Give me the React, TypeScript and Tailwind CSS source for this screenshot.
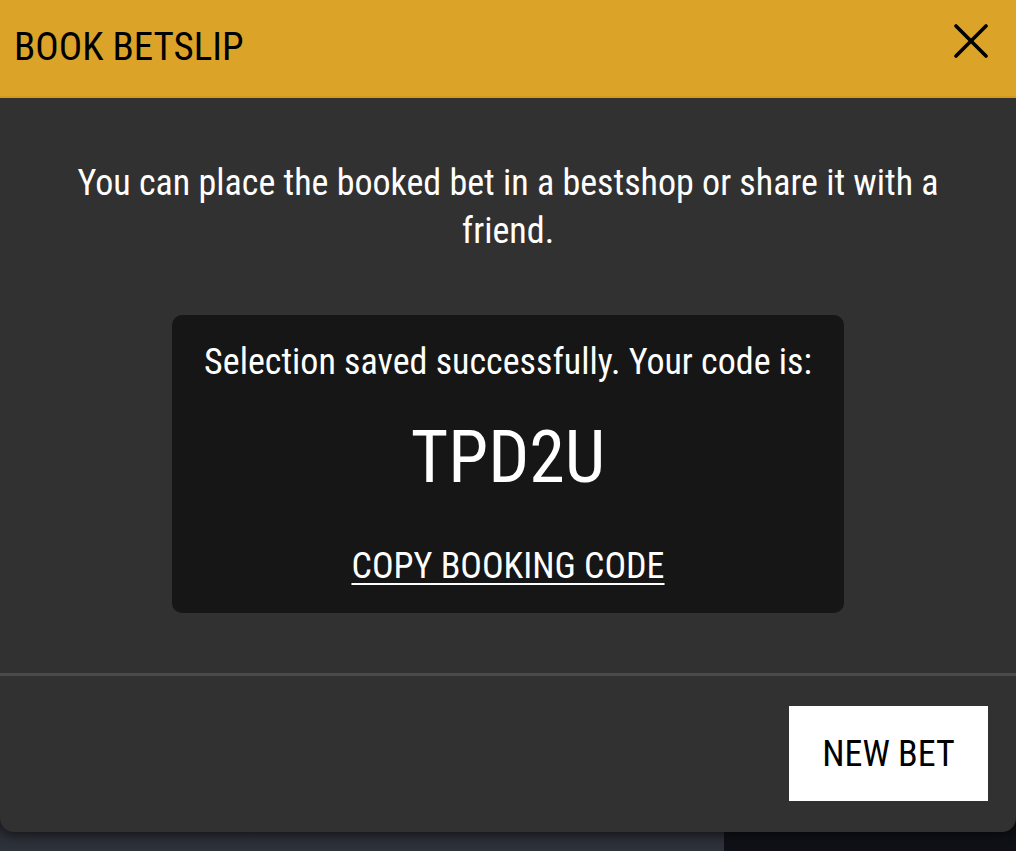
export default function App() {
  return (
    <div className="relative h-[851px] w-[1016px] overflow-hidden bg-[#0f1117] font-['Roboto_Condensed',Roboto,sans-serif]">
      {/* backdrop strip under the modal */}
      <div className="absolute bottom-0 left-0 h-[30px] w-[724px] bg-gradient-to-b from-[#272a30] to-[#2e323b]" />

      <div className="relative flex w-[1016px] flex-col overflow-hidden rounded-b-[14px] bg-[#313131] shadow-[0_2px_12px_rgba(0,0,0,0.6)]">
        {/* header */}
        <div className="flex h-[98px] items-center justify-between border-b-2 border-[#d39a1c] bg-[#dba428] pl-[14px] pr-[28px]">
          <h2 className="pb-[2px] text-[39px] leading-none text-black">BOOK BETSLIP</h2>
          <button className="mb-[14px] flex h-[34px] w-[34px] items-center justify-center">
            <svg width="34" height="34" viewBox="0 0 34 34" fill="none" stroke="black" strokeWidth="3.6" strokeLinecap="round">
              <line x1="2" y1="2" x2="32" y2="32" />
              <line x1="32" y1="2" x2="2" y2="32" />
            </svg>
          </button>
        </div>

        {/* body */}
        <div className="flex flex-col items-center px-[64px] pt-[61px] pb-[60px]">
          <p className="text-center text-[36px] leading-[48px] text-white">
            You can place the booked bet in a bestshop or share it with a friend.
          </p>

          <div className="mt-[60px] flex h-[298px] w-[672px] flex-col items-center rounded-[10px] bg-[#161616] pt-[23px]">
            <p className="text-[36px] leading-[48px] text-white">Selection saved successfully. Your code is:</p>
            <p className="mt-[36px] text-[72px] leading-none text-white">TPD2U</p>
            <button className="mt-[48px] text-[36px] leading-[48px] text-white underline decoration-2 underline-offset-[5px]">
              COPY BOOKING CODE
            </button>
          </div>
        </div>

        <div className="h-[3px] bg-[#4a4a4a]" />

        {/* footer */}
        <div className="flex justify-end pt-[30px] pr-[28px] pb-[31px]">
          <button className="flex h-[95px] w-[199px] items-center justify-center bg-white text-[36px] text-black">
            NEW BET
          </button>
        </div>
      </div>
    </div>
  );
}
